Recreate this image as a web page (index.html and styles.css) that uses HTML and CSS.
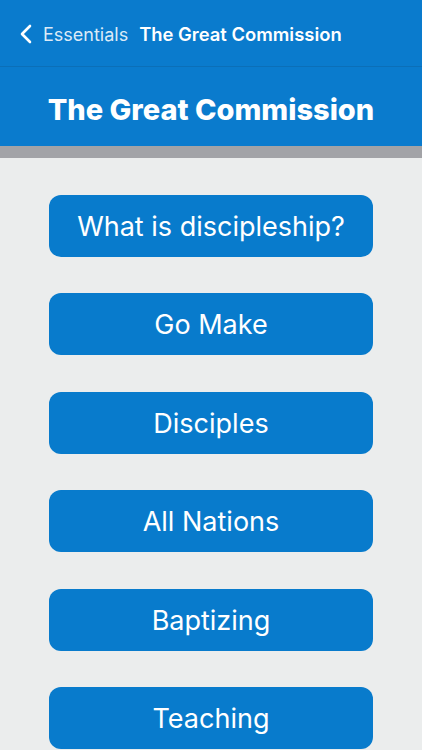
FILE: index.html
```html
<!DOCTYPE html>
<html lang="en">
<head>
  <meta charset="UTF-8">
  <meta name="viewport" content="width=device-width, initial-scale=1.0">
  <title>The Great Commission</title>
  <link rel="stylesheet" href="styles.css">
</head>
<body>
  <div class="nav-bar">
    <svg class="back-icon" width="12" height="20" viewBox="0 0 12 20">
      <path d="M10 2 L2 10 L10 18" fill="none" stroke="#fff" stroke-width="2.6" stroke-linecap="round" stroke-linejoin="round"/>
    </svg>
    <span class="back-label">Essentials</span>
    <span class="nav-title">The Great Commission</span>
  </div>
  <div class="title-band">
    <h1>The Great Commission</h1>
  </div>
  <div class="divider"></div>
  <div class="menu">
    <button class="menu-btn">What is discipleship?</button>
    <button class="menu-btn">Go Make</button>
    <button class="menu-btn">Disciples</button>
    <button class="menu-btn">All Nations</button>
    <button class="menu-btn">Baptizing</button>
    <button class="menu-btn">Teaching</button>
  </div>
</body>
</html>
```

FILE: styles.css
```css
body {
  margin: 0;
  font-family: Inter, "Open Sans", sans-serif;
  background: #ebeded;
  height: 750px;
  overflow: hidden;
}
.nav-bar {
  height: 67px;
  background: #0a7bcd;
  border-bottom: 1px solid #0b6fb8;
  display: flex;
  align-items: center;
  padding-left: 20px;
  padding-top: 2px;
  color: #fff;
  box-sizing: border-box;
}
.back-icon {
  margin-right: 11px;
}
.back-label {
  font-size: 18px;
  color: #dbeaf7;
  margin-right: 11px;
}
.nav-title {
  font-size: 18.4px;
  font-weight: 600;
}
.title-band {
  height: 79px;
  background: #0a7bcd;
  display: flex;
  align-items: center;
  justify-content: center;
  padding-top: 6px;
  box-sizing: border-box;
}
h1 {
  margin: 0;
  color: #fff;
  font-size: 29px;
  font-weight: 800;
}
.divider {
  height: 12px;
  background: #a2a3a7;
}
.menu {
  display: flex;
  flex-direction: column;
  align-items: center;
  gap: 36.4px;
  padding-top: 37px;
}
.menu-btn {
  width: 324px;
  height: 62px;
  flex-shrink: 0;
  background: #087bcc;
  color: #fff;
  border: none;
  border-radius: 12px;
  font-family: Inter, sans-serif;
  font-size: 27px;
  font-weight: 400;
  padding-top: 2px;
  cursor: pointer;
}
```
